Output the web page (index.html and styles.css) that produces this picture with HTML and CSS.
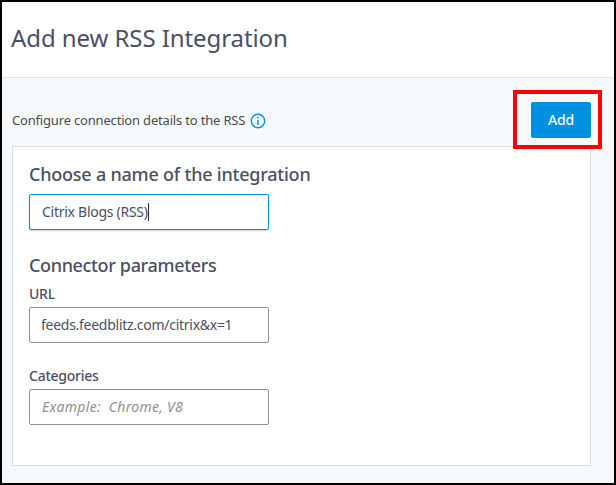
FILE: index.html
```html
<!DOCTYPE html>
<html lang="en">
<head>
<meta charset="utf-8">
<title>Add new RSS Integration</title>
<link rel="stylesheet" href="styles.css">
</head>
<body>
<div class="page">
  <header class="header"><h1 class="title">Add new RSS Integration</h1></header>
  <main class="main">
    <div class="toolbar">
      <p class="intro">Configure connection details to the RSS</p>
      <svg class="info" width="16" height="16" viewBox="0 0 16 16" fill="none" stroke="#0092e4">
        <circle cx="8" cy="8" r="6.7" stroke-width="1.4"/>
        <path d="M8 4v1.6M8 7v5" stroke-width="1.5"/>
      </svg>
      <div class="action"><button class="add" type="button">Add</button></div>
    </div>
    <form class="card">
      <h2 class="section">Choose a name of the integration</h2>
      <div class="field field-active"><span class="value">Citrix Blogs (RSS)</span><span class="caret"></span></div>
      <h2 class="section section-params">Connector parameters</h2>
      <label class="label label-url" for="url">URL</label>
      <input class="field url" id="url" type="text" value="feeds.feedblitz.com/citrix&amp;x=1">
      <label class="label label-categories" for="categories">Categories</label>
      <input class="field categories" id="categories" type="text" placeholder="Example:  Chrome, V8">
    </form>
  </main>
</div>
</body>
</html>
```
FILE: styles.css
```css
* { box-sizing: border-box; }
body { margin: 0; font-family: "Noto Sans", sans-serif; color: #4a5064; }
.page { height: 485px; border: 2px solid #000; display: flex; flex-direction: column; overflow: hidden; }
.header { height: 76px; flex: none; padding: 19px 0 0 9px; border-bottom: 1px solid #dfe3e8; background: #fff; }
.title { margin: 0; font-size: 24px; line-height: 34px; font-weight: 450; letter-spacing: -.08px; white-space: nowrap; }
.main { flex: 1; padding: 12px 23px 0 10px; background: #f5f9fc; }
.toolbar { height: 56px; display: flex; align-items: flex-start; }
.intro { margin: 20px 0 0; font-size: 13px; line-height: 20px; color: #4c4c4c; white-space: nowrap; letter-spacing: -.18px; }
.info { margin: 23px 0 0 5px; }
.action { position: relative; z-index: 1; margin: 0 -11px 0 auto; width: 89px; height: 59px; border: 4px solid #f00; padding: 8px 7px 0 14px; }
.add { display: block; width: 60px; height: 36px; padding: 0; border: 0; border-radius: 2px; background: #0090e2; color: #fff; font: 500 14px/36px "Noto Sans", sans-serif; letter-spacing: -.2px; }
.card { height: 320px; padding: 13px 16px; border: 1px solid #dcdcdc; background: #fff; display: flex; flex-direction: column; align-items: flex-start; }
.section { margin: 0 0 6px; font-size: 18px; line-height: 28px; font-weight: 500; letter-spacing: -.22px; white-space: nowrap; }
.section-params { margin: 21px 0 6px; letter-spacing: -.35px; }
.field { display: flex; align-items: center; width: 240px; height: 36px; flex: none; padding: 0 12px; border: 1px solid #909295; border-radius: 2px; background: #fff; color: #4a5064; font: 400 14px/20px "Noto Sans", sans-serif; letter-spacing: -.27px; outline: 0; white-space: pre; }
.field-active { border-color: #0090e2; box-shadow: 0 1px 2px rgba(0,0,0,.2); }
.caret { width: 1px; height: 18px; background: #222a40; }
.url { padding: 0 12px 2px; text-indent: -1px; }
.categories { padding-bottom: 2px; }
.categories::placeholder { color: #909090; font-style: italic; letter-spacing: .3px; opacity: 1; }
.label { font-size: 14px; line-height: 18px; font-weight: 500; letter-spacing: -.25px; margin-bottom: 4px; }
.label-categories { margin-top: 24px; }
```
